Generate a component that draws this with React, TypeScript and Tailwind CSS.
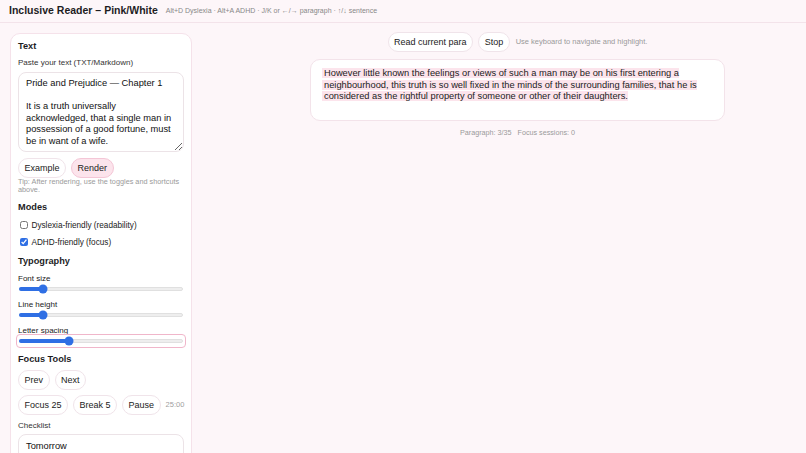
import { useState } from 'react';

const paragraph =
  'However little known the feelings or views of such a man may be on his first entering a neighbourhood, this truth is so well fixed in the minds of the surrounding families, that he is considered as the rightful property of someone or other of their daughters.';

function Pill({ children, active = false }: { children: React.ReactNode; active?: boolean }) {
  return (
    <button
      className={`h-[20px] whitespace-nowrap rounded-full border px-[5.5px] text-[9px] leading-none text-[#222] ${
        active ? 'border-[#f4c6d6] bg-[#fce4ec]' : 'border-[#f0e4ea] bg-white'
      }`}
    >
      {children}
    </button>
  );
}

// thin track with blue fill and round thumb
function Slider({ value, focused = false }: { value: number; focused?: boolean }) {
  return (
    <div
      className={`flex h-[10px] items-center rounded-[2px] px-[1px] ${
        focused ? 'outline outline-1 outline-offset-[1.5px] outline-[#f0b6ca]' : ''
      }`}
    >
      <div className="relative h-[4px] w-full rounded-full border border-[#e0e0e0] bg-[#eeeeee]">
        <div className="absolute -left-px -top-px h-[4px] rounded-full bg-[#2f6fe4]" style={{ width: `${value}%` }} />
        <div
          className="absolute top-1/2 h-[9px] w-[9px] -translate-x-1/2 -translate-y-1/2 rounded-full bg-[#2f6fe4]"
          style={{ left: `${value}%` }}
        />
      </div>
    </div>
  );
}

export default function App() {
  const [dyslexia, setDyslexia] = useState(false);
  const [adhd, setAdhd] = useState(true);

  return (
    <div className="h-[453px] overflow-hidden bg-[#fdf6f9] text-[#1d1d1f] [font-family:'Liberation_Sans',Arial,sans-serif]">
      {/* Header */}
      <header className="flex h-[23px] items-center gap-[8px] border-b border-[#f3e3ea] px-[9px]">
        <h1 className="text-[10.5px] font-bold">Inclusive Reader – Pink/White</h1>
        <span className="text-[7px] text-[#888]">
          Alt+D Dyslexia · Alt+A ADHD · J/K or ←/→ paragraph · ↑/↓ sentence
        </span>
      </header>

      <div className="flex pl-[10px] pt-[10px]">
        {/* Sidebar */}
        <aside className="w-[182px] shrink-0 rounded-[10px] border border-[#f5e2ea] bg-white px-[7px] pb-[8px] pt-[6px]">
          <h2 className="text-[9.2px] font-bold leading-[13px]">Text</h2>
          <label className="mt-[4px] block text-[8px] leading-[11px] text-[#333]">Paste your text (TXT/Markdown)</label>
          <textarea
            className="mt-[4px] block h-[80px] w-full resize-y overflow-hidden rounded-[8px] border border-[#ece3e7] px-[7px] pt-[5px] text-[9.3px] leading-[11.5px] text-[#111] outline-none"
            defaultValue={
              'Pride and Prejudice — Chapter 1\n\nIt is a truth universally acknowledged, that a single man in possession of a good fortune, must be in want of a wife.'
            }
          />
          <div className="mt-[6px] flex gap-[5px]">
            <Pill>Example</Pill>
            <Pill active>Render</Pill>
          </div>
          <p className="text-[7.3px] leading-[8px] text-[#9a9a9a]">
            Tip: After rendering, use the toggles and shortcuts above.
          </p>

          <h2 className="mt-[6.5px] text-[9.2px] font-bold leading-[13px]">Modes</h2>
          <label className="mt-[6px] flex items-center gap-[4px] text-[8.2px] leading-[11px] text-[#222]">
            <input
              type="checkbox"
              checked={dyslexia}
              onChange={() => setDyslexia(!dyslexia)}
              className="m-0 ml-[2px] h-[7.5px] w-[7.5px] accent-[#2f6fe4]"
            />
            Dyslexia-friendly (readability)
          </label>
          <label className="mt-[6px] flex items-center gap-[4px] text-[8.2px] leading-[11px] text-[#222]">
            <input
              type="checkbox"
              checked={adhd}
              onChange={() => setAdhd(!adhd)}
              className="m-0 ml-[2px] h-[7.5px] w-[7.5px] accent-[#2f6fe4]"
            />
            ADHD-friendly (focus)
          </label>

          <h2 className="mt-[7px] text-[9.2px] font-bold leading-[13px]">Typography</h2>
          <div className="mt-[5px] text-[8px] leading-[11px] text-[#222]">Font size</div>
          <Slider value={14} />
          <div className="mt-[5px] text-[8px] leading-[11px] text-[#222]">Line height</div>
          <Slider value={14} />
          <div className="mt-[5.5px] text-[8px] leading-[11px] text-[#222]">Letter spacing</div>
          <Slider value={30} focused />

          <h2 className="mt-[6.5px] text-[9.2px] font-bold leading-[13px]">Focus Tools</h2>
          <div className="mt-[4.5px] flex gap-[5px]">
            <Pill>Prev</Pill>
            <Pill>Next</Pill>
          </div>
          <div className="mt-[5px] flex items-center gap-[5px]">
            <Pill>Focus 25</Pill>
            <Pill>Break 5</Pill>
            <Pill>Pause</Pill>
            <span className="text-[7.5px] text-[#a0a0a0]">25:00</span>
          </div>
          <div className="mt-[5px] text-[8px] leading-[11px] text-[#333]">Checklist</div>
          <div className="mt-[2.5px] h-[32px] rounded-[8px] border border-[#ece3e7] px-[7px] pt-[5px] text-[9.3px] leading-[12px] text-[#111]">
            Tomorrow
          </div>
        </aside>

        {/* Main */}
        <main className="-mt-px flex flex-1 flex-col items-center pl-[37px]">
          <div className="flex items-center gap-[5px]">
            <Pill>Read current para</Pill>
            <Pill>Stop</Pill>
            <span className="ml-px text-[7.5px] text-[#9a9a9a]">Use keyboard to navigate and highlight.</span>
          </div>
          <div className="mt-[7px] h-[62px] w-[415px] rounded-[10px] border border-[#f3e3ea] bg-white px-[11px] pt-[8px]">
            <p className="text-[9.3px] leading-[11.5px] text-[#222]">
              <span className="bg-[#fce4ec] pl-[2px] [box-decoration-break:clone]">{paragraph}</span>
            </p>
          </div>
          <div className="mt-[6.5px] flex gap-[6px] text-[7.2px] leading-[9px] text-[#9a9a9a]">
            <span>Paragraph: 3/35</span>
            <span>Focus sessions: 0</span>
          </div>
        </main>
      </div>
    </div>
  );
}
